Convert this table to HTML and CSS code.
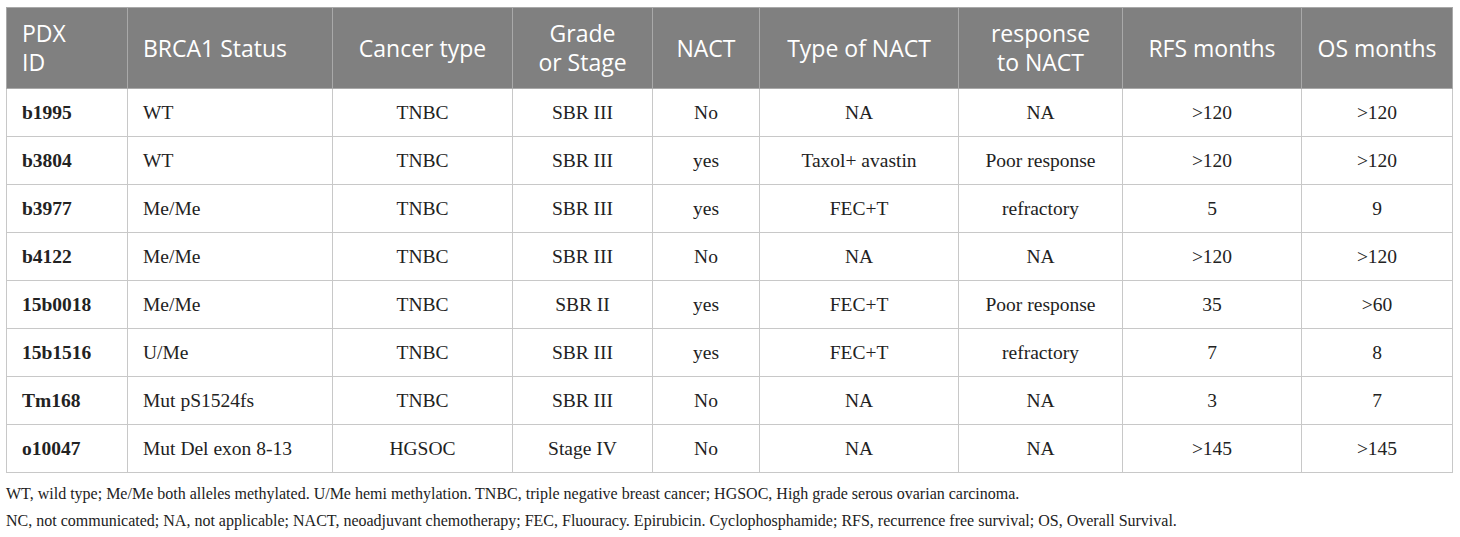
FILE: index.html
```html
<!DOCTYPE html>
<html lang="en">
<head>
    <meta charset="UTF-8">
    <meta name="viewport" content="width=device-width, initial-scale=1.0">
    <title>PDX models</title>
    <link rel="stylesheet" href="styles.css">
</head>
<body>
    <div class="wrap">
        <table class="pdx-table">
            <colgroup>
                <col style="width: 121px">
                <col style="width: 205px">
                <col style="width: 180px">
                <col style="width: 140px">
                <col style="width: 107px">
                <col style="width: 199px">
                <col style="width: 164px">
                <col style="width: 179px">
                <col style="width: 151px">
            </colgroup>
            <thead>
                <tr>
                    <th class="left">PDX<br>ID</th>
                    <th class="left">BRCA1 Status</th>
                    <th>Cancer type</th>
                    <th>Grade<br>or Stage</th>
                    <th>NACT</th>
                    <th>Type of NACT</th>
                    <th>response<br>to NACT</th>
                    <th>RFS months</th>
                    <th>OS months</th>
                </tr>
            </thead>
            <tbody>
                <tr>
                    <td class="id">b1995</td><td class="left">WT</td><td>TNBC</td><td>SBR III</td><td>No</td><td>NA</td><td>NA</td><td>&gt;120</td><td>&gt;120</td>
                </tr>
                <tr>
                    <td class="id">b3804</td><td class="left">WT</td><td>TNBC</td><td>SBR III</td><td>yes</td><td>Taxol+ avastin</td><td>Poor response</td><td>&gt;120</td><td>&gt;120</td>
                </tr>
                <tr>
                    <td class="id">b3977</td><td class="left">Me/Me</td><td>TNBC</td><td>SBR III</td><td>yes</td><td>FEC+T</td><td>refractory</td><td>5</td><td>9</td>
                </tr>
                <tr>
                    <td class="id">b4122</td><td class="left">Me/Me</td><td>TNBC</td><td>SBR III</td><td>No</td><td>NA</td><td>NA</td><td>&gt;120</td><td>&gt;120</td>
                </tr>
                <tr>
                    <td class="id">15b0018</td><td class="left">Me/Me</td><td>TNBC</td><td>SBR II</td><td>yes</td><td>FEC+T</td><td>Poor response</td><td>35</td><td>&gt;60</td>
                </tr>
                <tr>
                    <td class="id">15b1516</td><td class="left">U/Me</td><td>TNBC</td><td>SBR III</td><td>yes</td><td>FEC+T</td><td>refractory</td><td>7</td><td>8</td>
                </tr>
                <tr>
                    <td class="id">Tm168</td><td class="left">Mut pS1524fs</td><td>TNBC</td><td>SBR III</td><td>No</td><td>NA</td><td>NA</td><td>3</td><td>7</td>
                </tr>
                <tr>
                    <td class="id">o10047</td><td class="left">Mut Del exon 8-13</td><td>HGSOC</td><td>Stage IV</td><td>No</td><td>NA</td><td>NA</td><td>&gt;145</td><td>&gt;145</td>
                </tr>
            </tbody>
        </table>

        <div class="notes">
            <p>WT, wild type; Me/Me both alleles methylated. U/Me hemi methylation. TNBC, triple negative breast cancer; HGSOC, High grade serous ovarian carcinoma.</p>
            <p>NC, not communicated; NA, not applicable; NACT, neoadjuvant chemotherapy; FEC, Fluouracy. Epirubicin. Cyclophosphamide; RFS, recurrence free survival; OS, Overall Survival.</p>
        </div>
    </div>
</body>
</html>
```

FILE: styles.css
```css
body {
    margin: 0;
    background: #fff;
    font-family: "Liberation Serif", "Times New Roman", serif;
    color: #222;
}
.wrap {
    padding: 7px 8px 0 6px;
}
.pdx-table {
    border-collapse: collapse;
    table-layout: fixed;
    width: 1446px;
}
.pdx-table th {
    background-color: #808080;
    color: #fff;
    font-family: "Open Sans", "Noto Sans", sans-serif;
    font-weight: normal;
    font-size: 23px;
    line-height: 29px;
    height: 81px;
    padding: 0 6px;
    text-align: center;
    border: 1px solid #a9a9a9;
    box-sizing: border-box;
}
.pdx-table td {
    height: 48px;
    padding: 0 8px;
    font-size: 19.5px;
    text-align: center;
    border: 1px solid #c8c8c8;
    box-sizing: border-box;
}
.pdx-table .left {
    text-align: left;
    padding-left: 15px;
}
.pdx-table .id {
    text-align: left;
    padding-left: 15px;
    font-weight: bold;
}
.notes {
    margin-top: 7px;
    font-size: 16px;
    line-height: 27px;
}
.notes p {
    margin: 0;
}
```
